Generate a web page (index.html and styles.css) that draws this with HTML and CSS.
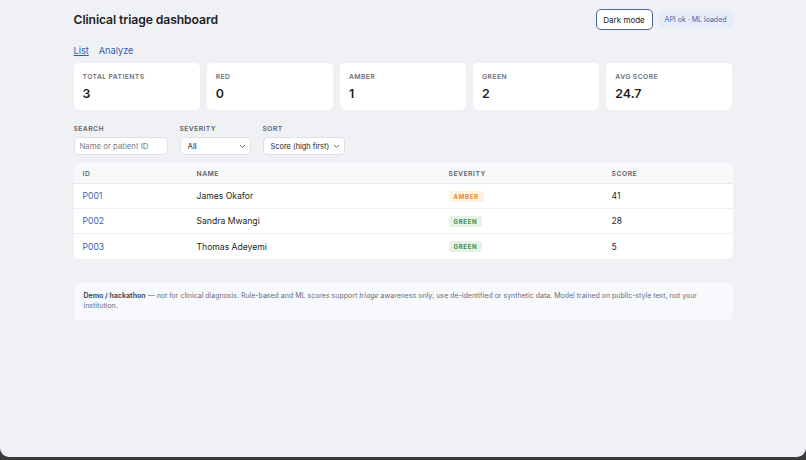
FILE: index.html
```html
<!DOCTYPE html>
<html lang="en">
<head>
  <meta charset="UTF-8">
  <title>Clinical triage dashboard</title>
  <link rel="stylesheet" href="styles.css">
</head>
<body>
  <div class="window">
    <div class="page">
      <header class="top">
        <h1>Clinical triage dashboard</h1>
        <div class="top-actions">
          <button class="theme-btn">Dark mode</button>
          <span class="status">API ok · ML loaded</span>
        </div>
      </header>

      <nav class="tabs">
        <a href="#" class="tab active">List</a>
        <a href="#" class="tab">Analyze</a>
      </nav>

      <section class="stats">
        <div class="stat"><div class="stat-label">Total patients</div><div class="stat-value">3</div></div>
        <div class="stat"><div class="stat-label">Red</div><div class="stat-value">0</div></div>
        <div class="stat"><div class="stat-label">Amber</div><div class="stat-value">1</div></div>
        <div class="stat"><div class="stat-label">Green</div><div class="stat-value">2</div></div>
        <div class="stat"><div class="stat-label">Avg score</div><div class="stat-value">24.7</div></div>
      </section>

      <section class="filters">
        <label class="field">
          <span class="field-label">Search</span>
          <input type="text" class="search" placeholder="Name or patient ID">
        </label>
        <label class="field">
          <span class="field-label">Severity</span>
          <span class="select-wrap sev">
            <select><option>All</option></select>
            <svg class="chev" width="7" height="5" viewBox="0 0 7 5"><path d="M1 1l2.5 2.5L6 1" fill="none" stroke="#777" stroke-width="1"/></svg>
          </span>
        </label>
        <label class="field">
          <span class="field-label">Sort</span>
          <span class="select-wrap sort">
            <select><option>Score (high first)</option></select>
            <svg class="chev" width="7" height="5" viewBox="0 0 7 5"><path d="M1 1l2.5 2.5L6 1" fill="none" stroke="#777" stroke-width="1"/></svg>
          </span>
        </label>
      </section>

      <table class="patients">
        <thead>
          <tr><th class="c-id">ID</th><th class="c-name">Name</th><th class="c-sev">Severity</th><th>Score</th></tr>
        </thead>
        <tbody>
          <tr><td><a href="#">P001</a></td><td>James Okafor</td><td><span class="badge amber">AMBER</span></td><td>41</td></tr>
          <tr><td><a href="#">P002</a></td><td>Sandra Mwangi</td><td><span class="badge green">GREEN</span></td><td>28</td></tr>
          <tr><td><a href="#">P003</a></td><td>Thomas Adeyemi</td><td><span class="badge green">GREEN</span></td><td>5</td></tr>
        </tbody>
      </table>

      <p class="note"><strong>Demo / hackathon</strong> — not for clinical diagnosis. Rule-based and ML scores support <em>triage</em> awareness only; use de-identified or synthetic data. Model trained on public-style text, not your institution.</p>
    </div>
  </div>
</body>
</html>
```

FILE: styles.css
```css
* {
  box-sizing: border-box;
}
body {
  margin: 0;
  background-color: #3b3b3e;
  font-family: Inter, "Noto Sans", sans-serif;
  color: #1d1f24;
}
.window {
  height: 457px;
  background-color: #f0f1f5;
  border-radius: 0 0 9px 9px;
}
.page {
  width: 659px;
  margin: 0 auto;
  padding-top: 9px;
}
.top {
  display: flex;
  justify-content: space-between;
  align-items: center;
  height: 21px;
}
h1 {
  margin: 0;
  font-size: 12.2px;
  font-weight: 600;
  letter-spacing: -0.1px;
}
.top-actions {
  display: flex;
  align-items: center;
  gap: 6px;
}
.theme-btn {
  font-family: inherit;
  font-size: 8px;
  height: 21px;
  width: 57px;
  padding: 0;
  background-color: #fff;
  color: #222;
  border: 1.5px solid #46679e;
  border-radius: 5px;
}
.status {
  font-size: 7px;
  color: #3c67b3;
  background-color: #e7edf8;
  padding: 4px 6px;
  border-radius: 4px;
}
.tabs {
  display: flex;
  gap: 10px;
  margin-top: 14px;
  height: 13px;
  align-items: center;
}
.tab {
  font-size: 9.2px;
  color: #2f5fae;
  text-decoration: none;
}
.tab.active {
  text-decoration: underline;
}
.stats {
  display: grid;
  grid-template-columns: repeat(5, 1fr);
  gap: 7px;
  margin-top: 6px;
}
.stat {
  background-color: #fff;
  border-radius: 5px;
  height: 47px;
  padding: 9px 9px 0;
}
.stat-label {
  font-size: 6.8px;
  font-weight: 600;
  text-transform: uppercase;
  letter-spacing: 0.4px;
  color: #6b6f78;
}
.stat-value {
  margin-top: 5px;
  font-size: 12.4px;
  font-weight: 600;
}
.filters {
  display: flex;
  gap: 12px;
  margin-top: 14px;
  align-items: flex-end;
}
.field {
  display: flex;
  flex-direction: column;
  gap: 4px;
}
.field-label {
  font-size: 6.8px;
  font-weight: 600;
  text-transform: uppercase;
  letter-spacing: 0.4px;
  color: #5e626b;
}
.search,
select {
  display: block;
  font-family: inherit;
  font-size: 7.8px;
  height: 18px;
  border: 1px solid #dfe1e6;
  border-radius: 4px;
  background-color: #fff;
  color: #222;
}
.search {
  width: 94px;
  padding: 0 5px;
}
.search::placeholder {
  color: #7b7e86;
}
.select-wrap {
  position: relative;
  display: block;
}
select {
  appearance: none;
  padding: 0 15px 0 7px;
}
.sev select {
  width: 71px;
}
.sort select {
  min-width: 81px;
  font-size: 7.4px;
  padding: 0 14px 0 7px;
}
.chev {
  position: absolute;
  right: 5px;
  top: 7px;
}
.patients {
  width: 100%;
  margin-top: 8px;
  border-collapse: separate;
  border-spacing: 0;
  background-color: #fff;
  border-radius: 6px;
  overflow: hidden;
  font-size: 8.6px;
}
.patients th {
  background-color: #f7f8fa;
  text-align: left;
  height: 21px;
  padding: 0 9px;
  font-size: 6.8px;
  font-weight: 600;
  text-transform: uppercase;
  letter-spacing: 0.5px;
  color: #5e626b;
  border-bottom: 1px solid #e8e9ed;
}
.c-id { width: 114px; }
.c-name { width: 252px; }
.c-sev { width: 163px; }
.patients td {
  height: 25px;
  padding: 0 9px;
  border-bottom: 1px solid #eeeff2;
}
.patients tr:last-child td {
  border-bottom: none;
}
.patients a {
  color: #3263b0;
  text-decoration: none;
}
.badge {
  display: inline-block;
  font-size: 6px;
  font-weight: 700;
  letter-spacing: 0.7px;
  padding: 2px 5px;
  border-radius: 3px;
}
.badge.amber {
  background-color: #fff3e0;
  color: #e38a2c;
}
.badge.green {
  background-color: #e5f3e5;
  color: #3f8a4a;
}
.note {
  margin: 24px 0 0;
  background-color: #f8f9fc;
  border-radius: 5px;
  padding: 8px 10px 9px;
  font-size: 7px;
  line-height: 10px;
  color: #6a6e77;
}
.note strong {
  color: #4a4e57;
}
```
